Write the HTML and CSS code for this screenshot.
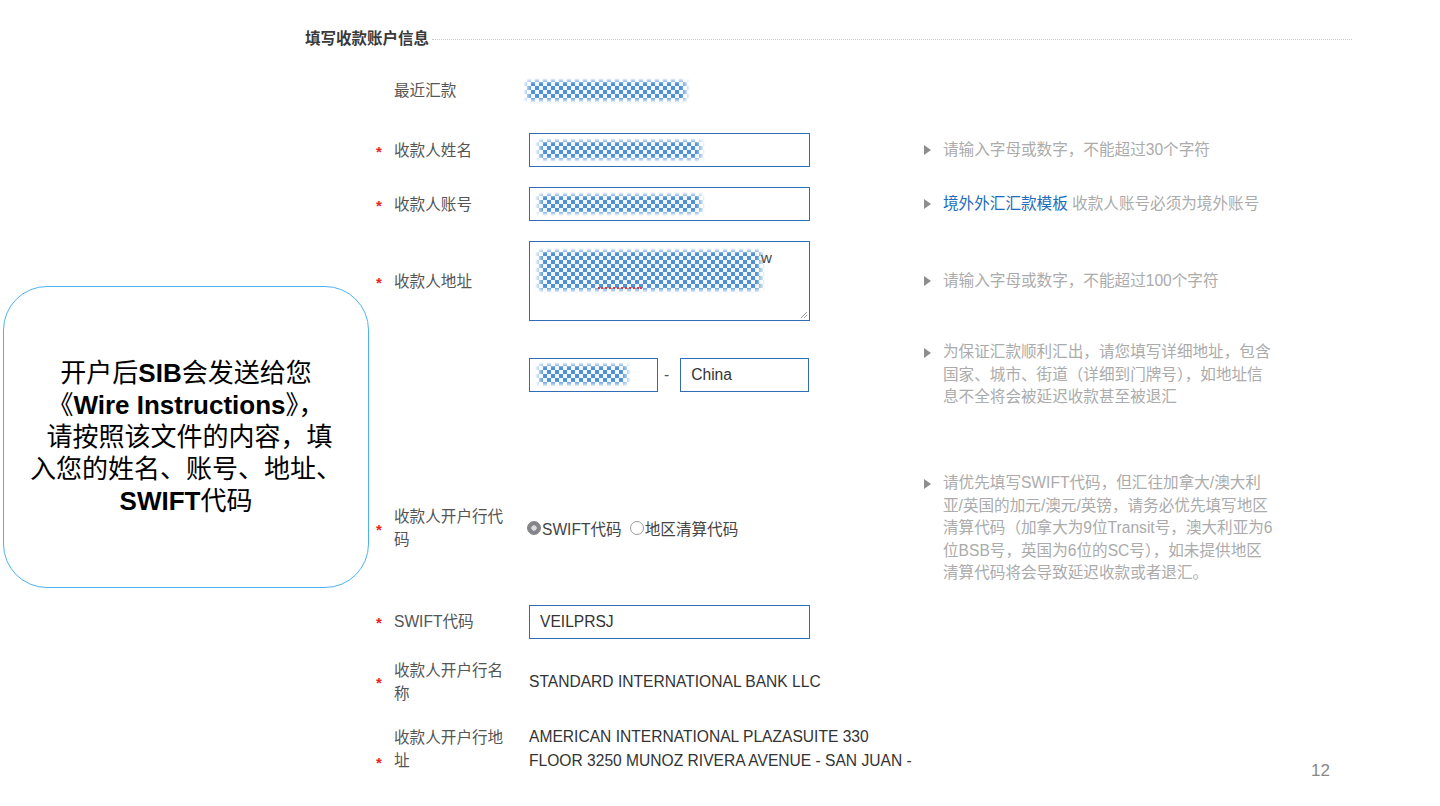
FILE: index.html
```html
<!DOCTYPE html>
<html lang="zh-CN">
<head>
<meta charset="utf-8">
<title>填写收款账户信息</title>
<link rel="stylesheet" href="styles.css">
</head>
<body>
<div class="slide">
  <section class="form">
    <div class="section-head">
      <h2 class="section-title">填写收款账户信息</h2>
      <span class="section-rule"></span>
    </div>
    <div class="rows">
      <div class="row row-recent">
        <span class="star"></span>
        <span class="label">最近汇款</span>
        <div class="field"><span class="blur blur-recent"></span></div>
      </div>

      <div class="row">
        <span class="star">*</span>
        <span class="label">收款人姓名</span>
        <div class="field"><div class="input input-wide"><span class="blur blur-name"></span></div></div>
        <div class="hint"><span class="tri"></span><span class="hint-text">请输入字母或数字，不能超过30个字符</span></div>
      </div>

      <div class="row">
        <span class="star">*</span>
        <span class="label">收款人账号</span>
        <div class="field"><div class="input input-wide"><span class="blur blur-name"></span></div></div>
        <div class="hint"><span class="tri"></span><span class="hint-text"><a class="link">境外外汇汇款模板</a> 收款人账号必须为境外账号</span></div>
      </div>

      <div class="row">
        <span class="star">*</span>
        <span class="label">收款人地址</span>
        <div class="field">
          <div class="textarea">
            <span class="blur blur-addr"></span>
            <span class="addr-tail">w</span>
            <span class="spell"></span>
            <svg class="grip" width="9" height="9" viewBox="0 0 9 9"><path d="M8 2 L2 8 M8 5 L5 8" stroke="#9a9a9a" stroke-width="1" fill="none"/></svg>
          </div>
        </div>
        <div class="hint"><span class="tri"></span><span class="hint-text">请输入字母或数字，不能超过100个字符</span></div>
      </div>

      <div class="row">
        <span class="star"></span>
        <span class="label"></span>
        <div class="field field-split">
          <div class="input input-half"><span class="blur blur-city"></span></div>
          <span class="dash">-</span>
          <div class="input input-half"><span class="input-value">China</span></div>
        </div>
        <div class="hint"><span class="tri"></span><span class="hint-text">为保证汇款顺利汇出，请您填写详细地址，包含<br>国家、城市、街道（详细到门牌号），如地址信<br>息不全将会被延迟收款甚至被退汇</span></div>
      </div>

      <div class="row row-code">
        <span class="star">*</span>
        <span class="label">收款人开户行代码</span>
        <div class="field field-radios">
          <span class="radio radio-on"></span><span class="radio-text">SWIFT代码</span>
          <span class="radio"></span><span class="radio-text">地区清算代码</span>
        </div>
        <div class="hint"><span class="tri"></span><span class="hint-text">请优先填写SWIFT代码，但汇往加拿大/澳大利<br>亚/英国的加元/澳元/英镑，请务必优先填写地区<br>清算代码（加拿大为9位Transit号，澳大利亚为6<br>位BSB号，英国为6位的SC号），如未提供地区<br>清算代码将会导致延迟收款或者退汇。</span></div>
      </div>

      <div class="row">
        <span class="star">*</span>
        <span class="label">SWIFT代码</span>
        <div class="field"><div class="input input-wide"><span class="input-value">VEILPRSJ</span></div></div>
      </div>

      <div class="row">
        <span class="star">*</span>
        <span class="label">收款人开户行名称</span>
        <div class="field"><span class="value">STANDARD INTERNATIONAL BANK LLC</span></div>
      </div>

      <div class="row">
        <span class="star star-end">*</span>
        <span class="label">收款人开户行地址</span>
        <div class="field"><span class="value value-multi">AMERICAN INTERNATIONAL PLAZASUITE 330<br>FLOOR 3250 MUNOZ RIVERA AVENUE - SAN JUAN -</span></div>
      </div>
    </div>
  </section>

  <aside class="callout">
    <p class="callout-text">开户后<b>SIB</b>会发送给您<br>《<b>Wire Instructions</b>》，<br>&nbsp;请按照该文件的内容，填<br>入您的姓名、账号、地址、<br><b>SWIFT</b>代码</p>
  </aside>

  <span class="page-no">12</span>
</div>
</body>
</html>
```

FILE: styles.css
```css
* { box-sizing: border-box; }

html, body {
  margin: 0;
  padding: 0;
  background: #fff;
}

body {
  font-family: "Liberation Sans", "Noto Sans CJK SC", sans-serif;
  color: #333;
}

.slide {
  position: relative;
  width: 1440px;
  height: 806px;
  overflow: hidden;
  background: #fff;
}

.form {
  margin-left: 305px;
  width: 1047px;
  padding-top: 29px;
}

.section-head {
  display: flex;
  align-items: center;
}

.section-title {
  margin: 0;
  font-size: 15.5px;
  line-height: 20px;
  font-weight: 700;
  color: #3a3a3a;
  white-space: nowrap;
}

.section-rule {
  flex: 1;
  margin-left: 3px;
  border-top: 1px dotted #c9c9c9;
}

.rows {
  display: flex;
  flex-direction: column;
  gap: 20px;
  margin-top: 24px;
}

.row {
  display: grid;
  grid-template-columns: 19px 135px 395px 1fr;
  align-items: center;
  padding-left: 70px;
  font-size: 15.6px;
}

.row-recent {
  height: 34px;
  margin-bottom: 6px;
}

.row-code {
  margin-top: 43.5px;
}

.star {
  color: #e8231f;
  font-size: 15px;
  font-weight: 700;
  line-height: 23px;
  padding-left: 1px;
  transform: translateY(1px);
}

.star-end {
  align-self: end;
}

.label {
  max-width: 116px;
  color: #555;
  line-height: 23px;
}

.field {
  display: flex;
  align-items: center;
}

.input {
  display: flex;
  align-items: center;
  height: 34px;
  border: 1px solid #2f6eb6;
  padding: 0 5px;
  background: #fff;
}

.input-wide { width: 281px; }
.input-half { width: 129px; }

.input-value {
  padding-left: 5px;
  color: #333;
}

.dash {
  margin: 0 11px 0 6px;
  color: #555;
}

.textarea {
  position: relative;
  width: 281px;
  height: 80px;
  border: 1px solid #2f6eb6;
  padding: 6px 5px;
}

.grip {
  position: absolute;
  right: 1px;
  bottom: 1px;
}

.addr-tail {
  position: absolute;
  left: 231px;
  top: 6px;
  color: #444;
  font-size: 15px;
  line-height: 20px;
}

.spell {
  position: absolute;
  left: 68px;
  top: 45px;
  width: 44px;
  border-top: 2px dotted #e23a3a;
}

.blur {
  display: block;
  background-color: #f2f7fd;
  background-image: conic-gradient(#4f90d6 25%, #f2f7fd 0 50%, #4f90d6 0 75%, #f2f7fd 0);
  background-size: 8px 8px;
  -webkit-mask-image: linear-gradient(to right, transparent, #000 9px, #000 calc(100% - 9px), transparent), linear-gradient(to bottom, transparent, #000 6px, #000 calc(100% - 6px), transparent);
  -webkit-mask-composite: source-in;
  mask-image: linear-gradient(to right, transparent, #000 9px, #000 calc(100% - 9px), transparent), linear-gradient(to bottom, transparent, #000 6px, #000 calc(100% - 6px), transparent);
  mask-composite: intersect;
}

.blur-recent { width: 167px; height: 25px; margin-left: -6px; }
.blur-name { width: 170px; height: 24px; }
.blur-addr { width: 230px; height: 45px; }
.blur-city { width: 96px; height: 25px; }

.field-radios {
  color: #444;
}

.radio {
  width: 14px;
  height: 14px;
  border-radius: 50%;
  border: 1px solid #9c9c9c;
  background: #fff;
  flex: none;
}

.radio:first-child { margin-left: -2px; }

.radio-on {
  border-color: #858589;
  background: radial-gradient(circle, #dcdcde 0 2.4px, #858589 3px);
}

.radio-text + .radio {
  margin-left: 8px;
}

.radio-text {
  padding-left: 1px;
  white-space: nowrap;
}

.value {
  color: #333;
  white-space: nowrap;
}

.value-multi {
  line-height: 24px;
}

.hint {
  display: flex;
  align-items: flex-start;
  color: #ababab;
  line-height: 22.5px;
}

.tri {
  flex: none;
  width: 0;
  height: 0;
  margin-top: 6.5px;
  margin-right: 12px;
  border-left: 7px solid #8d8d8d;
  border-top: 5px solid transparent;
  border-bottom: 5px solid transparent;
}

.hint-text {
  white-space: nowrap;
}

.link {
  color: #1d6bbd;
  text-decoration: none;
}

.callout {
  position: absolute;
  left: 3px;
  top: 286px;
  width: 366px;
  height: 302px;
  border: 1.5px solid #4cb2f0;
  border-radius: 44px;
  display: flex;
  align-items: center;
  justify-content: center;
  background: #fff;
}

.callout-text {
  margin: 0;
  text-align: center;
  font-family: "Liberation Sans", "Noto Sans CJK SC", sans-serif;
  font-size: 26px;
  line-height: 32px;
  color: #000;
  white-space: nowrap;
}

.callout-text b {
  font-weight: 700;
}

.page-no {
  position: absolute;
  right: 110px;
  bottom: 25px;
  font-size: 17px;
  color: #888;
}
```
